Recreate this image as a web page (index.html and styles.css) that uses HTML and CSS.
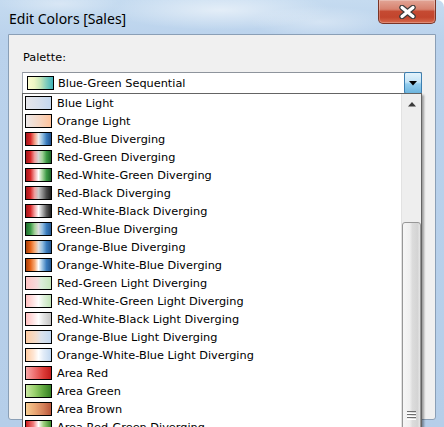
FILE: index.html
```html
<!DOCTYPE html>
<html>
<head>
<meta charset="utf-8">
<title>Edit Colors [Sales]</title>
<link rel="stylesheet" href="styles.css">
</head>
<body>
<div class="window">
  <div class="titlebar">
    <span class="title">Edit Colors [Sales]</span>
    <div class="close">
      <svg width="17" height="14" viewBox="0 0 17 14">
        <path d="M3 2.5 L14 11.5 M14 2.5 L3 11.5" stroke="#3c3c3c" stroke-width="5.5" stroke-linecap="round"/>
        <path d="M3 2.5 L14 11.5 M14 2.5 L3 11.5" stroke="#ffffff" stroke-width="3.2" stroke-linecap="round"/>
      </svg>
    </div>
  </div>
  <div class="client">
    <div class="label">Palette:</div>
    <div class="combo">
      <span class="swatch combo-swatch sw-bgseq"></span>
      <span class="combo-text">Blue-Green Sequential</span>
      <div class="ddbtn">
        <svg width="8" height="5" viewBox="0 0 8 5"><path d="M0 0 H8 L4 4.5 Z" fill="#000"/></svg>
      </div>
    </div>
  </div>
  <div class="popup">
    <ul class="items">
      <li class="item"><span class="swatch sw-bluelight"></span>Blue Light</li>
      <li class="item"><span class="swatch sw-orangelight"></span>Orange Light</li>
      <li class="item"><span class="swatch sw-redblue"></span>Red-Blue Diverging</li>
      <li class="item"><span class="swatch sw-redgreen"></span>Red-Green Diverging</li>
      <li class="item"><span class="swatch sw-rwg"></span>Red-White-Green Diverging</li>
      <li class="item"><span class="swatch sw-redblack"></span>Red-Black Diverging</li>
      <li class="item"><span class="swatch sw-rwb"></span>Red-White-Black Diverging</li>
      <li class="item"><span class="swatch sw-greenblue"></span>Green-Blue Diverging</li>
      <li class="item"><span class="swatch sw-orangeblue"></span>Orange-Blue Diverging</li>
      <li class="item"><span class="swatch sw-owb"></span>Orange-White-Blue Diverging</li>
      <li class="item"><span class="swatch sw-rgl"></span>Red-Green Light Diverging</li>
      <li class="item"><span class="swatch sw-rwgl"></span>Red-White-Green Light Diverging</li>
      <li class="item"><span class="swatch sw-rwbl"></span>Red-White-Black Light Diverging</li>
      <li class="item"><span class="swatch sw-obl"></span>Orange-Blue Light Diverging</li>
      <li class="item"><span class="swatch sw-owbl"></span>Orange-White-Blue Light Diverging</li>
      <li class="item"><span class="swatch sw-areared"></span>Area Red</li>
      <li class="item"><span class="swatch sw-areagreen"></span>Area Green</li>
      <li class="item"><span class="swatch sw-areabrown"></span>Area Brown</li>
      <li class="item"><span class="swatch sw-arearg"></span>Area Red-Green Diverging</li>
    </ul>
    <div class="scrollbar">
      <div class="sb-up">
        <svg width="8" height="5" viewBox="0 0 8 5"><path d="M0 4.5 H8 L4 0 Z" fill="#3a3a3a"/></svg>
      </div>
      <div class="sb-thumb">
        <div class="grip"><span></span><span></span><span></span></div>
      </div>
    </div>
  </div>
</div>
</body>
</html>
```
FILE: styles.css
```css
* { box-sizing: border-box; }
html, body { margin: 0; padding: 0; }
body {
  width: 444px;
  height: 427px;
  overflow: hidden;
  background: #ffffff;
  font-family: "DejaVu Sans", "Liberation Sans", sans-serif;
  font-size: 11.3px;
  color: #000;
}
.window {
  position: relative;
  width: 444px;
  height: 427px;
  overflow: hidden;
  border-radius: 0 7px 0 0;
  background:
    radial-gradient(ellipse 110px 20px at 220px 10px, rgba(255,255,255,0.55), rgba(255,255,255,0)),
    radial-gradient(ellipse 70px 16px at 320px 22px, rgba(255,255,255,0.35), rgba(255,255,255,0)),
    radial-gradient(ellipse 60px 14px at 60px 4px, rgba(255,255,255,0.35), rgba(255,255,255,0)),
    linear-gradient(180deg, #c5dbf0 0, #bad2ec 40px, #b5cee9 100%);
}
.titlebar {
  height: 34px;
  display: flex;
  justify-content: space-between;
  align-items: flex-start;
}
.title {
  font-family: "Noto Sans", "DejaVu Sans", sans-serif;
  font-size: 14px;
  line-height: 20px;
  padding: 9px 0 0 9px;
  color: #000;
}
.close {
  width: 58px;
  height: 24px;
  margin-right: 8px;
  border: 1px solid #7a3426;
  border-top: none;
  border-radius: 0 0 5px 5px;
  background: linear-gradient(180deg, #e2a596 0%, #d7826f 40%, #c54a32 50%, #c2452d 75%, #d7694c 100%);
  box-shadow: inset 0 0 0 1px rgba(255,255,255,0.25);
  display: flex;
  align-items: center;
  justify-content: center;
}
.close svg { display: block; margin-top: 1px; }
.client {
  margin: 0 8px;
  height: 386px;
  border: 1px solid #8a9fb6;
  border-radius: 0 0 3px 3px;
  background: #f0f0f0;
  padding: 16px 13px 0 13px;
}
.label {
  line-height: 14px;
  padding-left: 1px;
  margin-bottom: 7px;
}
.combo {
  width: 400px;
  height: 22px;
  border: 1px solid #a3a9b1;
  border-top-color: #8e949c;
  background: #fff;
  display: flex;
  align-items: center;
  padding-left: 4px;
  line-height: 20px;
}
.combo-swatch { border-color: #4a4a4a; }
.combo-text { margin-left: 4px; padding-top: 1px; }
.ddbtn {
  margin-left: auto;
  margin-right: -1px;
  align-self: stretch;
  margin-top: -1px;
  margin-bottom: -1px;
  width: 18px;
  border: 1px solid #3c7fb1;
  border-radius: 2px;
  background: linear-gradient(180deg, #e4f3fc 0%, #c4e4f6 45%, #93cdee 55%, #6db5de 100%);
  display: flex;
  align-items: center;
  justify-content: center;
}
.ddbtn svg { display: block; }
.popup {
  position: absolute;
  left: 22px;
  top: 93px;
  width: 400px;
  height: 345px;
  border: 1px solid #646464;
  background: #fff;
  box-shadow: 2px 2px 2px rgba(0,0,0,0.35);
  display: flex;
}
.items {
  list-style: none;
  margin: 0;
  padding: 0;
  flex: 1;
}
.item {
  height: 18px;
  display: flex;
  align-items: center;
  padding-left: 2px;
  white-space: nowrap;
}
.swatch {
  flex: none;
  width: 27px;
  height: 14px;
  border: 1px solid #000;
  margin-right: 5px;
}
.combo-swatch { margin-right: 0; }
.scrollbar {
  width: 20px;
  flex: none;
  background: #eeeeee;
  border-left: 1px solid #e2e2e2;
  display: flex;
  flex-direction: column;
  align-items: stretch;
}
.sb-up {
  flex: none;
  height: 20px;
  display: flex;
  align-items: center;
  justify-content: center;
}
.sb-up svg { display: block; margin-left: 1px; }
.sb-thumb {
  flex: none;
  margin-top: 108px;
  height: 300px;
  border: 1px solid #979797;
  border-radius: 3px;
  background: linear-gradient(90deg, #f6f6f6 0%, #efefef 40%, #dcdcdc 55%, #d4d4d4 85%, #e6e6e6 100%);
  display: flex;
  justify-content: center;
  padding-top: 188px;
}
.grip {
  width: 9px;
  display: flex;
  flex-direction: column;
}
.grip span {
  height: 3px;
  border-top: 1px solid #6f6f6f;
  border-bottom: 1px solid #ffffff;
}
/* palettes */
.sw-bgseq { background: linear-gradient(90deg, #fbfcd0 0%, #eef6c4 25%, #c4e6b8 50%, #7ccbbc 75%, #3fb2b8 100%); }
.sw-bluelight { background: linear-gradient(90deg, #e6e6ea 0%, #d8e0ec 50%, #c4d8f0 100%); }
.sw-orangelight { background: linear-gradient(90deg, #ece8e8 0%, #f6d6c2 55%, #ffc39c 100%); }
.sw-redblue { background: linear-gradient(90deg, #a3161b 0%, #d8292a 18%, #f3a28a 35%, #ececec 50%, #97c2e2 65%, #3a7cbd 82%, #1c4c88 100%); }
.sw-redgreen { background: linear-gradient(90deg, #a3161b 0%, #d8292a 18%, #f0a0a0 35%, #d4d4d4 50%, #a2d39a 65%, #3d9a46 82%, #1c6428 100%); }
.sw-rwg { background: linear-gradient(90deg, #a3161b 0%, #d8292a 18%, #f4a6a6 35%, #ffffff 50%, #a8d6a0 65%, #3d9a46 82%, #1c6428 100%); }
.sw-redblack { background: linear-gradient(90deg, #a3161b 0%, #d8292a 18%, #efa2a2 35%, #c8c8c8 50%, #8e8e8e 65%, #4a4a4a 82%, #1e1e1e 100%); }
.sw-rwb { background: linear-gradient(90deg, #a3161b 0%, #d8292a 18%, #f4a6a6 35%, #ffffff 50%, #b4b4b4 65%, #5a5a5a 82%, #1e1e1e 100%); }
.sw-greenblue { background: linear-gradient(90deg, #1f6b2e 0%, #3c9a48 18%, #a6d29c 35%, #dcdcdc 50%, #96c0e2 65%, #3a7cbd 82%, #23568e 100%); }
.sw-orangeblue { background: linear-gradient(90deg, #a8400a 0%, #e5641a 18%, #f8ac78 35%, #dcdcdc 50%, #96c0e2 65%, #3a7cbd 82%, #23568e 100%); }
.sw-owb { background: linear-gradient(90deg, #a8400a 0%, #e5641a 18%, #f8ac78 35%, #ffffff 50%, #9cc4e4 65%, #3a7cbd 82%, #23568e 100%); }
.sw-rgl { background: linear-gradient(90deg, #ffc4c4 0%, #f4dcdc 45%, #dceedc 60%, #c4e6bc 100%); }
.sw-rwgl { background: linear-gradient(90deg, #ffc0c0 0%, #ffe6e6 30%, #ffffff 50%, #e2f2de 70%, #c2e4b8 100%); }
.sw-rwbl { background: linear-gradient(90deg, #ffc0c0 0%, #ffe6e6 30%, #ffffff 50%, #e4e4e4 70%, #c4c4c4 100%); }
.sw-obl { background: linear-gradient(90deg, #ffcca2 0%, #f2dccc 40%, #dde3ec 60%, #c2d8f0 100%); }
.sw-owbl { background: linear-gradient(90deg, #ffcca2 0%, #ffe6d4 30%, #ffffff 50%, #e2ecf8 70%, #c2d8f0 100%); }
.sw-areared { background: linear-gradient(90deg, #f8a8a8 0%, #ee7070 35%, #dc3c38 70%, #c21c1c 100%); }
.sw-areagreen { background: linear-gradient(90deg, #cbe8a4 0%, #98d06c 35%, #5ea63e 70%, #347e22 100%); }
.sw-areabrown { background: linear-gradient(90deg, #f6cc92 0%, #eaa876 35%, #d4805a 70%, #b8563a 100%); }
.sw-arearg { background: linear-gradient(90deg, #cc1c1c 0%, #f08080 30%, #ffffff 50%, #a0d080 70%, #3a8a2a 100%); }
```
